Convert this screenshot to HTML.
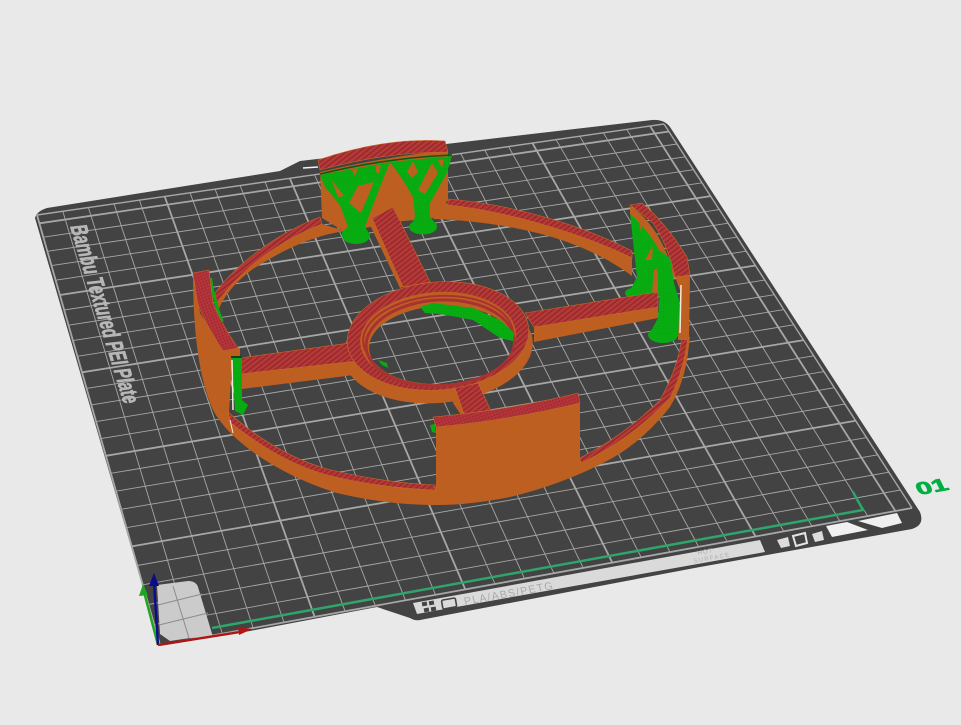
<!DOCTYPE html>
<html><head><meta charset="utf-8"><style>html,body{margin:0;padding:0;background:#e9e9e9;width:961px;height:725px;overflow:hidden}svg{display:block}[fill="url(#h)"],[fill="url(#d)"]{stroke:#c66a2a;stroke-width:.6}</style></head>
<body>
<svg width="961" height="725" viewBox="0 0 961 725" xmlns="http://www.w3.org/2000/svg">
<defs>
<pattern id="h" width="4" height="4" patternUnits="userSpaceOnUse" patternTransform="rotate(-38)"><rect width="4" height="4" fill="#b73838"/><rect width="4" height="1.5" fill="#942a2a"/></pattern>
<pattern id="d" width="3" height="3" patternUnits="userSpaceOnUse" patternTransform="rotate(-20)"><rect width="3" height="3" fill="#b4343a"/><circle cx="1.5" cy="1.5" r=".7" fill="#90262c"/></pattern>
<pattern id="g" width="2.5" height="2.5" patternUnits="userSpaceOnUse"><rect width="2.5" height="2.5" fill="#08ad12"/><circle cx="1" cy="1" r=".3" fill="#067a0e"/></pattern>
<clipPath id="hole"><ellipse cx="441" cy="345" rx="72" ry="39" transform="rotate(-3 441 345)"/></clipPath>
</defs>
<rect width="961" height="725" fill="#e9e9e9"/>
<g id="plate">
<path d="M35,218 Q37,211 47,208 L280,171 L300,161 L652,120 Q664,119 670,127 L920,512 Q925,525 912,529 L700,567 L420,620 Q415,621 410,618 L377,607 L250,631 L160,646 Z" fill="#424342"/>
<g id="grid" stroke="#a6a7a6" fill="none"></g>
</g>
<path d="M157,585 L188,581 Q196,581 198,587 L213,637 L190,638 L170,641 L160,634 Z" fill="#cbcbcb"/>
<g stroke="#8c8c8c" stroke-width="1" fill="none"><path d="M158,605 L202,594"/><path d="M159,625 L208,613"/><path d="M173,586 L189,638"/></g>
<path d="M212,628 L863,510 L853,492" fill="none" stroke="#2fa56c" stroke-width="2.5"/>
<path d="M413,603 L760,540 L765,552 L417,614 Z" fill="#d9dad9"/>
<rect x="422" y="602" width="5" height="4" fill="#444" transform="rotate(-10 424 604)"/><rect x="429" y="601" width="5" height="4" fill="#444" transform="rotate(-10 431 603)"/><rect x="424" y="608" width="5" height="4" fill="#444" transform="rotate(-10 426 610)"/><rect x="431" y="607" width="5" height="4" fill="#444" transform="rotate(-10 433 609)"/>
<rect x="442" y="599" width="14" height="9" rx="1.5" fill="none" stroke="#444" stroke-width="1.6" transform="rotate(-10 449 603)"/>
<text transform="matrix(1,-0.18,0.25,1,465,605)" font-family="'Liberation Sans',sans-serif" font-size="10.5" letter-spacing="1.2" fill="#a9aaa9">PLA/ABS/PETG</text>
<text transform="matrix(1,-0.18,0.25,1,698,555)" font-family="'Liberation Sans',sans-serif" font-size="6" letter-spacing="1" fill="#b0b0b0">HOT</text>
<text transform="matrix(1,-0.18,0.25,1,694,563)" font-family="'Liberation Sans',sans-serif" font-size="6" letter-spacing="1.2" fill="#b0b0b0">SURFACE</text>
<path d="M777,540 L788,537 L790,546 L781,548 Z" fill="#dcdcdc"/>
<path d="M793,536 L805,533 L807,543 L796,546 Z" fill="none" stroke="#e4e4e4" stroke-width="2"/>
<path d="M812,534 L822,531 L824,540 L815,542 Z" fill="#dcdcdc"/>
<path d="M826,526 L847,522 L868,530 L832,537 Z" fill="#f0f0f0"/>
<path d="M858,521 L897,513 L902,523 L882,528 Z" fill="#f0f0f0"/>
<text transform="matrix(1.55,-0.27,0.45,0.92,919,495)" font-family="'Liberation Sans',sans-serif" font-size="18" font-weight="700" fill="#00ae42" stroke="#00ae42" stroke-width=".7">01</text>
<text transform="matrix(0.29,0.957,-1.48,0.17,70,226)" font-family="'Liberation Sans',sans-serif" font-size="16" font-weight="700" fill="#b6b7b6" stroke="#b6b7b6" stroke-width=".5" textLength="186" lengthAdjust="spacingAndGlyphs">Bambu Textured PEI Plate</text>
<path d="M303,168 L318,167" stroke="#f4f4f4" stroke-width="1.5"/>

<!-- axes -->
<g fill="none" stroke-width="2.4"><path d="M158,645 L144,592" stroke="#1fa51f"/><path d="M158,645 L154,582" stroke="#0b0b8e"/><path d="M158,645 L240,632" stroke="#b01414"/></g>
<path d="M143,584 L148,595 L139,596 Z" fill="#1fa51f"/><path d="M154,573 L159,586 L149,586 Z" fill="#0b0b8e"/><path d="M252,629 L238,627 L239,635 Z" fill="#b01414"/>

<!-- back ring -->
<path d="M448,204 C500,208 580,232 632,258 L632,276 C600,252 560,238 533,232 C500,224 465,220 433,219 L440,200 Z" fill="#bd5f20"/>
<path d="M448,199 C510,204 580,224 632,251 L632,258 C580,232 500,210 448,205 Z" fill="url(#h)"/>
<path d="M217,302 C240,270 280,240 322,224 L345,231 C310,236 280,252 253,269 C235,282 222,298 217,314 Z" fill="#bd5f20"/>
<path d="M215,293 C240,260 280,232 320,217 L322,224 C280,240 240,270 217,303 Z" fill="url(#h)"/>

<!-- back block -->
<path d="M320,172 Q385,157 448,150 L448,200 L433,218 L395,222 L345,232 L322,218 Z" fill="#bd5f20"/>
<path d="M318,160 Q385,137 445,141 L448,152 Q385,152 320,170 Z" fill="url(#h)"/>
<path d="M320,174 Q385,158 452,155" fill="none" stroke="#0a5a14" stroke-width="1.6"/>
<g fill="url(#g)">
<path d="M320,175 L390,162 L380,187 L370,213 L365,227 L370,235 L360,242 L343,238 L342,232 L348,227 L340,205 L325,187 Z"/>
<ellipse cx="356" cy="236" rx="14" ry="8"/>
<path d="M390,162 L452,156 L447,173 L430,203 L430,217 L437,225 L423,233 L410,227 L415,217 L413,197 L403,180 Z"/>
<ellipse cx="423" cy="227" rx="14" ry="7.5"/>
</g>
<g fill="#bd5f20">
<path d="M331,179 L344,196 L338,197 Z"/><path d="M352,170 L358,168 L355,176 Z"/><path d="M358,186 L374,182 L361,213 L349,203 Z"/><path d="M376,166 L381,165 L379,174 L376,172 Z"/>
<path d="M407,172 L413,161 L418,172 L412,178 Z"/><path d="M418,190 L432,163 L438,173 L425,194 Z"/><path d="M438,160 L444,160 L442,168 Z"/>
</g>

<!-- right far tree -->
<g fill="url(#g)"><path d="M630,213 L645,226 L662,248 L672,262 L672,290 L658,296 L627,296 L637,277 L634,250 Z"/><ellipse cx="633" cy="293" rx="8" ry="5"/></g>
<g fill="#bd5f20"><path d="M639,223 L642,223 L641,232 Z"/><path d="M653,245 L645,260 L652,260 Z"/><path d="M654,270 L658,268 L658,292 L652,292 Z"/></g>

<!-- hub wall + spokes -->
<ellipse cx="438" cy="349" rx="95" ry="54" transform="rotate(-5 438 349)" fill="#bd5f20"/>
<path d="M240,374 L360,358 L378,372 L242,389 Z" fill="#bd5f20"/>
<path d="M240,358 L350,343 L366,360 L240,374 Z" fill="url(#h)"/>
<path d="M534,327 L658,307 L658,318 L534,342 Z" fill="#bd5f20"/>
<path d="M525,313 L658,292 L658,307 L534,327 Z" fill="url(#h)"/>
<path d="M370,225 L372,218 L403,287 L400,288 Z" fill="#bd5f20"/>
<path d="M372,218 L393,207 L430,282 L403,287 Z" fill="url(#h)"/>
<path d="M453,390 L456,388 L466,418 L463,418 L453,403 Z" fill="#bd5f20"/>
<path d="M455,388 L478,383 L492,413 L465,417 Z" fill="url(#h)"/>

<!-- hub top -->
<ellipse cx="438" cy="336" rx="91" ry="54" transform="rotate(-5 438 336)" fill="url(#h)"/>
<ellipse cx="438" cy="338" rx="78" ry="46" transform="rotate(-4 438 338)" fill="#bd5f20"/>
<ellipse cx="438" cy="337" rx="75" ry="41" transform="rotate(-4 438 337)" fill="none" stroke="#a83232" stroke-width="2"/>
<ellipse cx="440" cy="343" rx="74" ry="43" transform="rotate(-3 440 343)" fill="none" stroke="#a83232" stroke-width="3"/>
<use href="#plate" clip-path="url(#hole)"/>
<g fill="url(#g)">
<path d="M420,307 L433,303 L473,308 L500,320 L514,333 L513,341 L500,338 L473,320 L440,314 L425,313 Z"/>
<path d="M378,360 L387,363 L388,368 L382,365 Z"/>
</g>

<!-- right tree front -->
<path d="M630,206 Q660,225 675,277 L672,282 Q660,240 630,214 Z" fill="#bd5f20"/>
<g fill="url(#g)"><path d="M652,245 L670,258 L674,283 L679,300 L680,335 L664,343 L649,335 L658,318 L660,290 L657,270 Z"/><ellipse cx="663" cy="335" rx="15" ry="8"/></g>

<!-- left green -->
<path d="M209,278 Q212,300 220,320 L224,322 Q215,300 212,278 Z" fill="url(#g)"/>
<path d="M430,425 L435,424 L436,433 L432,432 Z" fill="url(#g)"/>

<!-- left + front-left wall -->
<path d="M193,273 C193,320 197,375 213,410 C232,445 285,477 337,493 C380,503 410,505 440,505 L440,487 Q385,484 327,470 Q280,455 229,414 L232,358 L240,357 L240,348 L223,350 L200,313 Z" fill="#bd5f20"/>
<path d="M228,412 Q275,454 327,469 Q385,483 435,485 L435,490 Q380,488 327,475 Q280,462 231,423 Z" fill="url(#h)"/>
<path d="M193,273 L209,270 L213,303 Q222,325 238,348 L223,351 Q200,315 197,300 Z" fill="url(#d)"/>
<path d="M232,358 L242,358 L242,400 L248,405 L243,415 L235,411 Z" fill="url(#g)"/>
<path d="M231,357 L242,357" stroke="#14401c" stroke-width="2"/>
<path d="M232,360 L233,410" stroke="#f2e8dc" stroke-width="1.5"/>
<path d="M230,420 L233,433" stroke="#f2e8dc" stroke-width="1"/>

<!-- front block + right ring -->
<path d="M436,427 Q510,420 580,403 L580,460 Q625,440 660,400 Q678,370 682,337 L690,337 L689,345 Q686,380 670,407 Q640,445 603,463 Q560,485 510,497 Q470,505 436,505 Z" fill="#bd5f20"/>
<path d="M580,458 Q625,435 660,400 Q678,368 682,337 L688,337 Q684,370 670,398 Q630,440 581,463 Z" fill="url(#h)"/>
<path d="M433,417 Q510,410 578,393 L580,403 Q510,420 436,427 Z" fill="url(#d)"/>

<!-- right block -->
<path d="M675,277 L690,275 L689,340 L678,340 L680,290 Z" fill="#bd5f20"/>
<path d="M630,205 L642,203 Q665,222 687,257 L690,275 L675,277 Q668,245 653,223 Z" fill="url(#h)"/>
<path d="M681,285 L680,333" stroke="#f2e8dc" stroke-width="1.5"/>
</svg>
<script>
(function(){
var P=[[160,645],[912,508],[664,124],[37,215]];
var x0=P[0][0],y0=P[0][1],x1=P[1][0],y1=P[1][1],x2=P[2][0],y2=P[2][1],x3=P[3][0],y3=P[3][1];
var dx1=x1-x2,dx2=x3-x2,dx3=x0-x1+x2-x3,dy1=y1-y2,dy2=y3-y2,dy3=y0-y1+y2-y3;
var det=dx1*dy2-dx2*dy1,g=(dx3*dy2-dx2*dy3)/det,h=(dx1*dy3-dx3*dy1)/det;
var a=x1-x0+g*x1,b=x3-x0+h*x3,d=y1-y0+g*y1,e=y3-y0+h*y3;
function m(u,v){var w=g*u+h*v+1;return [((a*u+b*v+x0)/w).toFixed(1),((d*u+e*v+y0)/w).toFixed(1)];}
var G=document.getElementById('grid'),s='';
function line(p,q,w){s+='<line x1="'+p[0]+'" y1="'+p[1]+'" x2="'+q[0]+'" y2="'+q[1]+'" stroke-width="'+w+'"/>';}
for(var i=0;i<=25;i++){var t=i*10/256,w=(i%5==0)?1.8:0.9;line(m(t,0),m(t,1),w);line(m(0,t),m(1,t),w);}
line(m(1,0),m(1,1),1.4);line(m(0,1),m(1,1),1.4);
G.innerHTML=s;
})();
</script>
</body></html>
